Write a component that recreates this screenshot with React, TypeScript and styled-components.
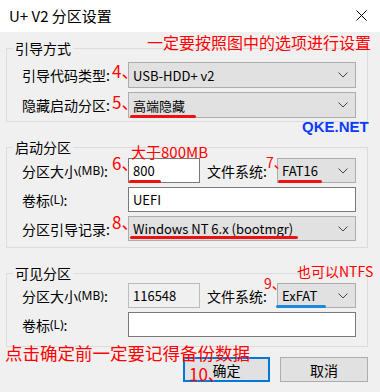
import React from 'react';
import styled, { createGlobalStyle } from 'styled-components';

const GlobalStyle = createGlobalStyle`
    html, body {
        margin: 0;
        padding: 0;
        background: #f0f0f0;
    }
    body {
        font-family: 'Noto Sans CJK SC', 'Noto Sans', sans-serif;
        color: #000;
    }
`;

const RED = '#ff0000';

function Chevron() {
    return (
        <svg width='10' height='6' viewBox='0 0 10 6'>
            <path d='M0.5 0.5 L5 5 L9.5 0.5' stroke='#444' strokeWidth='1' fill='none' />
        </svg>
    );
}

function CloseIcon() {
    return (
        <svg width='11' height='11' viewBox='0 0 11 11'>
            <path d='M0.5 0.5 L10.5 10.5 M10.5 0.5 L0.5 10.5' stroke='#000' strokeWidth='1' fill='none' />
        </svg>
    );
}

type Mark = { text: string; top: number };
type Line = { left: number; width: number; bottom: number; color?: string };

function Combo({ value, width, mark, line }: { value: string; width?: number; mark?: Mark; line?: Line }) {
    return (
        <ComboBox $width={width}>
            <FieldText>{value}</FieldText>
            <Chevron />
            {line && <Underline $left={line.left} $width={line.width} $bottom={line.bottom} $color={line.color} />}
        </ComboBox>
    );
}

function Edit({ value, width, disabled, line }: { value: string; width?: number; disabled?: boolean; line?: Line }) {
    return (
        <EditBox $width={width} $disabled={disabled}>
            <FieldText>{value}</FieldText>
            {line && <Underline $left={line.left} $width={line.width} $bottom={line.bottom} $color={line.color} />}
        </EditBox>
    );
}

function Label({ text, mark }: { text: React.ReactNode; mark?: Mark }) {
    return (
        <LabelCell>
            {text}
            {mark && <StepMark $top={mark.top}>{mark.text}</StepMark>}
        </LabelCell>
    );
}

export default function App() {
    return (
        <Window>
            <GlobalStyle />
            <TitleBar>
                <Title>U+ V2 分区设置</Title>
                <CloseIcon />
            </TitleBar>
            <Body>
                <Group $gap={0} $pad='5px 11px 3px 6px'>
                    <Legend>引导方式</Legend>
                    <Rows $row={26}>
                        <Row>
                            <Label text='引导代码类型:' mark={{ text: '4、', top: 0 }} />
                            <Combo value='USB-HDD+ v2' />
                        </Row>
                        <Row>
                            <Label text='隐藏启动分区:' mark={{ text: '5、', top: 1 }} />
                            <Combo value='高端隐藏' line={{ left: 1, width: 66, bottom: -1 }} />
                        </Row>
                    </Rows>
                </Group>

                <Group $gap={16} $pad='2px 11px 6px 6px'>
                    <Legend>启动分区</Legend>
                    <Rows $row={25}>
                        <Row>
                            <Label text={<>分区大小<Small>(MB)</Small>:</>} mark={{ text: '6、', top: -4 }} />
                            <Edit value='800' width={72} line={{ left: 0, width: 32, bottom: -1 }} />
                            <SideLabel>文件系统:</SideLabel>
                            <Combo value='FAT16' line={{ left: 0, width: 44, bottom: -1 }} />
                        </Row>
                        <Row>
                            <Label text={<>卷标<Small>(L)</Small>:</>} />
                            <Edit value='UEFI' />
                        </Row>
                        <Row>
                            <Label text='分区引导记录:' mark={{ text: '8、', top: -3 }} />
                            <Combo value='Windows NT 6.x (bootmgr)' line={{ left: 1, width: 168, bottom: 1 }} />
                        </Row>
                    </Rows>
                </Group>

                <Group $gap={16} $pad='1px 11px 9px 6px'>
                    <Legend>可见分区</Legend>
                    <Rows $row={25}>
                        <Row>
                            <Label text={<>分区大小<Small>(MB)</Small>:</>} />
                            <Edit value='116548' width={72} disabled />
                            <SideLabel>文件系统:</SideLabel>
                            <Combo value='ExFAT' line={{ left: -2, width: 50, bottom: -1, color: '#1e88dc' }} />
                        </Row>
                        <Row>
                            <Label text={<>卷标<Small>(L)</Small>:</>} />
                            <Edit value='' />
                        </Row>
                    </Rows>
                </Group>

                <ButtonBar>
                    <Button $width={87} $primary>确定</Button>
                    <Button $width={88}>取消</Button>
                </ButtonBar>
            </Body>

            <HeaderNote>一定要按照图中的选项进行设置</HeaderNote>
            <SiteMark>QKE.NET</SiteMark>
            <SizeNote>大于800MB</SizeNote>
            <NtfsNote>也可以NTFS</NtfsNote>
            <HandMark $x={266} $y={155} $size={14}>7、</HandMark>
            <HandMark $x={264} $y={276} $size={14}>9、</HandMark>
            <HandMark $x={189} $y={365} $size={17}>10、</HandMark>
            <FooterNote>点击确定前一定要记得备份数据</FooterNote>
        </Window>
    );
}

const Window = styled.div`
    position: relative;
    width: 380px;
    height: 392px;
    background: #f0f0f0;
    overflow: hidden;
`;

const TitleBar = styled.div`
    height: 32px;
    box-sizing: border-box;
    background: #fff;
    display: flex;
    align-items: center;
    justify-content: space-between;
    padding: 0 13px 2px 9px;
`;

const Title = styled.div`
    font-size: 15px;
    line-height: 1;
`;

const Body = styled.div`
    display: flex;
    flex-direction: column;
    padding: 7px 12px 0 6px;
`;

const Group = styled.fieldset<{ $gap: number; $pad: string }>`
    margin: ${({ $gap }) => $gap}px 0 0 0;
    padding: ${({ $pad }) => $pad};
    border: 1px solid #dcdcdc;
    min-width: 0;
`;

const Legend = styled.legend`
    padding: 0 2px;
    margin-left: 0;
    font-size: 14px;
    line-height: 18px;
`;

const Rows = styled.div<{ $row: number }>`
    display: grid;
    grid-auto-rows: ${({ $row }) => $row}px;
    row-gap: 4px;
    margin-left: 9px;
`;

const Row = styled.div`
    display: flex;
    align-items: stretch;
`;

const LabelCell = styled.div`
    position: relative;
    flex: 0 0 106px;
    display: flex;
    align-items: center;
    font-size: 14px;
    white-space: nowrap;
`;

const Small = styled.span`
    font-family: 'Noto Sans', sans-serif;
    font-size: 12px;
`;

const SideLabel = styled.div`
    flex: 0 0 70px;
    margin-left: 7px;
    display: flex;
    align-items: center;
    font-size: 14px;
    white-space: nowrap;
`;

const StepMark = styled.span<{ $top: number }>`
    position: absolute;
    left: 90px;
    top: ${({ $top }) => $top}px;
    color: ${RED};
    font-size: 17px;
    line-height: 1;
`;

const ComboBox = styled.div<{ $width?: number }>`
    position: relative;
    box-sizing: border-box;
    flex: ${({ $width }) => ($width ? `0 0 ${$width}px` : '1 1 auto')};
    display: flex;
    align-items: center;
    justify-content: space-between;
    padding: 0 7px 0 4px;
    background: #e1e1e1;
    border: 1px solid #adadad;
`;

const EditBox = styled.div<{ $width?: number; $disabled?: boolean }>`
    position: relative;
    box-sizing: border-box;
    flex: ${({ $width }) => ($width ? `0 0 ${$width}px` : '1 1 auto')};
    display: flex;
    align-items: center;
    padding: 0 4px;
    background: ${({ $disabled }) => ($disabled ? '#f0f0f0' : '#fff')};
    border: 1px solid ${({ $disabled }) => ($disabled ? '#bcbcbc' : '#7a7a7a')};
`;

const FieldText = styled.span`
    font-size: 13px;
    line-height: 1;
    white-space: nowrap;
`;

const Underline = styled.span<{ $left: number; $width: number; $bottom: number; $color?: string }>`
    position: absolute;
    left: ${({ $left }) => $left}px;
    bottom: ${({ $bottom }) => $bottom}px;
    width: ${({ $width }) => $width}px;
    height: 3px;
    border-radius: 1.5px;
    background: ${({ $color }) => $color || '#ee1111'};
`;

const ButtonBar = styled.div`
    display: flex;
    justify-content: flex-end;
    gap: 10px;
    margin-top: 10px;
`;

const Button = styled.div<{ $width: number; $primary?: boolean }>`
    box-sizing: border-box;
    width: ${({ $width }) => $width}px;
    height: 25px;
    display: flex;
    align-items: center;
    justify-content: center;
    font-size: 14px;
    background: #e1e1e1;
    border: ${({ $primary }) => ($primary ? '2px solid #0078d7' : '1px solid #adadad')};
`;

const HeaderNote = styled.div`
    position: absolute;
    left: 147px;
    top: 34px;
    color: ${RED};
    font-size: 16px;
    line-height: 1;
    white-space: nowrap;
`;

const SiteMark = styled.div`
    position: absolute;
    left: 302px;
    top: 119px;
    color: #0a3cff;
    font-family: 'Liberation Sans', Arial, sans-serif;
    font-weight: bold;
    font-size: 15px;
    line-height: 1;
`;

const SizeNote = styled.div`
    position: absolute;
    left: 131px;
    top: 144px;
    color: ${RED};
    font-size: 15px;
    line-height: 1;
`;

const NtfsNote = styled.div`
    position: absolute;
    left: 297px;
    top: 264px;
    color: ${RED};
    font-size: 14px;
    line-height: 1;
`;

const HandMark = styled.div<{ $x: number; $y: number; $size: number }>`
    position: absolute;
    left: ${({ $x }) => $x}px;
    top: ${({ $y }) => $y}px;
    color: ${RED};
    font-size: ${({ $size }) => $size}px;
    line-height: 1;
`;

const FooterNote = styled.div`
    position: absolute;
    left: 5px;
    top: 344px;
    color: ${RED};
    font-size: 17.5px;
    line-height: 1;
    white-space: nowrap;
`;
